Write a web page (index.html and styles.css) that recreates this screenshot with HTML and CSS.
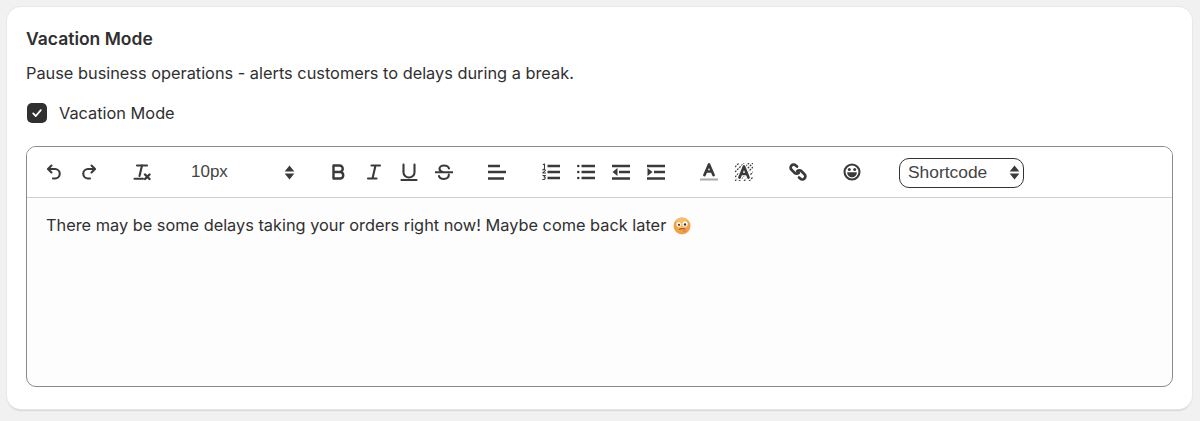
FILE: index.html
```html
<!DOCTYPE html>
<html lang="en">
<head>
    <meta charset="UTF-8">
    <meta name="viewport" content="width=device-width, initial-scale=1.0">
    <title>Vacation Mode</title>
    <link rel="stylesheet" href="styles.css">
</head>
<body>
    <main class="card">
        <h2 class="card-title">Vacation Mode</h2>
        <p class="card-desc">Pause business operations - alerts customers to delays during a break.</p>
        <label class="check-row">
            <span class="check-box">
                <svg width="12" height="12" viewBox="0 0 12 12"><path d="M2.2 6.4l2.6 2.6 5-5.8" fill="none" stroke="#fff" stroke-width="1.8" stroke-linecap="round" stroke-linejoin="round"/></svg>
            </span>
            <span>Vacation Mode</span>
        </label>

        <div class="editor">
            <div class="toolbar">
                <div class="tool-group">
                    <button class="tool" title="Undo">
                        <svg class="icon" viewBox="0 0 18 18"><path class="st" d="M6.5 2.5L3 6l3.5 3.500"/><path class="st" d="M3.5 6H10a4.500 4.500 0 0 1 0 9.500H8"/></svg>
                    </button>
                    <button class="tool" title="Redo">
                        <svg class="icon" viewBox="0 0 18 18"><path class="st" d="M11.5 2.5L15 6l-3.500 3.500"/><path class="st" d="M14.500 6H8a4.500 4.500 0 0 0 0 9.500h2"/></svg>
                    </button>
                </div>
                <div class="tool-group">
                    <button class="tool" title="Clear formatting">
                        <svg class="icon" viewBox="0 0 18 18"><path class="st" d="M4 2.500h10"/><path class="st" d="M9 2.500L6.500 13"/><path class="st" d="M1.500 15.800h8.500" stroke-width="1.200"/><path class="st thick" d="M12 11.500l4.500 4.500M16.500 11.500L12 16"/></svg>
                    </button>
                </div>
                <div class="size-picker">
                    <span>10px</span>
                    <svg class="updown" viewBox="0 0 10 14"><path d="M5 .5l4.500 5.500H.5zM5 13.500L.5 8h9z"/></svg>
                </div>
                <div class="tool-group">
                    <button class="tool" title="Bold">
                        <svg class="icon" viewBox="0 0 18 18"><path class="st thick" d="M3.500 2.500h6a3.200 3.200 0 0 1 0 6.500h-6zM3.500 9h7a3.300 3.300 0 0 1 0 6.500h-7z"/></svg>
                    </button>
                    <button class="tool" title="Italic">
                        <svg class="icon" viewBox="0 0 18 18"><path class="st" d="M6.500 2.500h8.500M3 15.500h8.500M10.500 2.500l-3 13"/></svg>
                    </button>
                    <button class="tool" title="Underline">
                        <svg class="icon" viewBox="0 0 18 18"><path class="st" d="M3.500 1.500v8a5.500 5 0 0 0 11 0v-8"/><path class="st" d="M1.500 17h15"/></svg>
                    </button>
                    <button class="tool" title="Strikethrough">
                        <svg class="icon" viewBox="0 0 18 18"><path class="st" d="M14 5.500C13.500 3.600 11.200 2.500 9 2.500 6.800 2.500 4.500 3.500 4.500 5.800c0 1.700 1.200 2.600 3 3.100"/><path class="st" d="M13.800 11.500c.4 2.800-2.200 4.500-4.800 4.500-2.500 0-4.500-1-5-3"/><path class="st" d="M.5 9.200h17" stroke-width="1.300"/></svg>
                    </button>
                </div>
                <div class="tool-group">
                    <button class="tool" title="Align">
                        <svg class="icon" viewBox="0 0 18 18"><path class="st flat" d="M0 3h12M0 9h18M0 15.500h16"/></svg>
                    </button>
                </div>
                <div class="tool-group">
                    <button class="tool" title="Ordered list">
                        <svg class="icon" viewBox="0 0 18 18"><path class="st flat" d="M5.500 3h12.500M5.500 9h12.500M5.500 15h12.500"/><path class="st thin" d="M1.300 1.500l1.200-.5v4.500M.8 7c.4-1 2.800-.8 2.400.6-.3.800-2 1.300-2.400 2.400h2.800M.9 12.500h2.500L2 13.900c1.800 0 1.800 3-1.200 2.500"/></svg>
                    </button>
                    <button class="tool" title="Bullet list">
                        <svg class="icon" viewBox="0 0 18 18"><path class="st flat" d="M4.500 3h13.500M4.500 9h13.500M4.500 15h13.500"/><circle cx="1.300" cy="3" r="1.300"/><circle cx="1.300" cy="9" r="1.300"/><circle cx="1.300" cy="15" r="1.300"/></svg>
                    </button>
                    <button class="tool" title="Decrease indent">
                        <svg class="icon" viewBox="0 0 18 18"><path class="st flat" d="M0 3h18M7 9h11M0 15.500h18"/><path d="M5.500 5v8L.5 9z"/></svg>
                    </button>
                    <button class="tool" title="Increase indent">
                        <svg class="icon" viewBox="0 0 18 18"><path class="st flat" d="M0 3h18M7 9h11M0 15.500h18"/><path d="M.5 5v8l5-4z"/></svg>
                    </button>
                </div>
                <div class="tool-group">
                    <button class="tool" title="Text colour">
                        <svg class="icon" viewBox="0 0 18 18"><path class="st bold" d="M4.500 12L9 1.500 13.500 12M6 8.500h6"/><path d="M0 15.500h18v2H0z" fill="#aaa"/></svg>
                    </button>
                    <button class="tool" title="Background colour">
                        <svg class="icon" viewBox="0 0 18 18"><path class="hatch" d="M0 4L4 0M0 9L9 0M0 14L14 0M0 18L18 0M4 18L18 4M9 18l9-9M14 18l4-4"/><path class="st halo" d="M4.500 14.500L9 3.500l4.500 11M6 11h6"/><path class="st bold" d="M4.500 14.500L9 3.500l4.500 11M6 11h6"/></svg>
                    </button>
                </div>
                <div class="tool-group">
                    <button class="tool" title="Link">
                        <svg class="icon" viewBox="0 0 18 18"><path class="st bold" d="M8 3.600L6.800 2.500a3 3 0 0 0-4.300 4.300l3 3a3 3 0 0 0 4.300 0"/><path class="st bold" d="M10 14.400l1.200 1.100a3 3 0 0 0 4.300-4.300l-3-3a3 3 0 0 0-4.300 0"/></svg>
                    </button>
                </div>
                <div class="tool-group emoji-tool">
                    <button class="tool" title="Emoji">
                        <svg class="icon" viewBox="0 0 18 18"><circle class="st" cx="9" cy="9" r="7.500" stroke-width="2.400"/><circle cx="6.300" cy="6.500" r="1.500"/><circle cx="11.700" cy="6.500" r="1.500"/><path d="M4.200 9.200h9.600c0 3.200-2.200 5-4.800 5s-4.800-1.800-4.800-5z"/></svg>
                    </button>
                </div>
                <div class="shortcode">
                    <span>Shortcode</span>
                    <svg class="updown" viewBox="0 0 10 14"><path d="M5 .5l4.500 5.500H.5zM5 13.500L.5 8h9z"/></svg>
                </div>
            </div>
            <div class="editor-body">
                There may be some delays taking your orders right now! Maybe come back later
                <svg class="emoji" viewBox="0 0 18 18">
                    <circle cx="9" cy="9" r="8.500" fill="#f0a24a"/>
                    <circle cx="9" cy="6.500" r="6" fill="#f6bd6a"/>
                    <circle cx="5.800" cy="7.500" r="2.200" fill="#fff"/>
                    <circle cx="12" cy="7" r="2.500" fill="#fff"/>
                    <circle cx="6" cy="7.800" r="1.100" fill="#4a3320"/>
                    <circle cx="12" cy="7.500" r="1.200" fill="#4a3320"/>
                    <path d="M6 12.500c2-1 4-1 6.500-.5" fill="none" stroke="#a5592a" stroke-width="1.200"/>
                    <circle cx="11.500" cy="13.800" r="1.800" fill="#e8845c"/>
                </svg>
            </div>
        </div>
    </main>
</body>
</html>
```

FILE: styles.css
```css
html, body {
    height: 100%;
}
body {
    font-family: Inter, "Noto Sans", sans-serif;
    font-size: 16.33px;
    color: #303030;
    margin: 0;
    padding: 7px 8px 12px 7px;
    box-sizing: border-box;
    background-color: #f1f1f1;
    overflow: hidden;
}
.card {
    height: 402px;
    box-sizing: border-box;
    padding: 21px 19px 0;
    background: #fff;
    border-radius: 14px;
    box-shadow: 0 0 0 1px #e8e8e8, 0 2px 1px #d6d6d6;
    display: flex;
    flex-direction: column;
}
.card-title {
    font-size: 17.5px;
    font-weight: 600;
    line-height: 22px;
    margin: 0;
}
.card-desc {
    line-height: 22px;
    margin: 12px 0 0 0;
}
.check-row {
    display: flex;
    align-items: center;
    gap: 12px;
    margin: 18px 0 0 1px;
    height: 22px;
}
.check-box {
    width: 20px;
    height: 20px;
    border-radius: 5px;
    background: #303030;
    display: flex;
    align-items: center;
    justify-content: center;
}
.editor {
    margin-top: 22px;
    height: 241px;
    box-sizing: border-box;
    border: 1px solid #8a8a8a;
    border-radius: 10px;
    overflow: hidden;
    background: #fdfdfd;
}
.toolbar {
    height: 51px;
    box-sizing: border-box;
    padding: 0 9px;
    background: #fff;
    border-bottom: 1px solid #cfcfcf;
    display: flex;
    align-items: center;
    gap: 18.5px;
}
.tool-group {
    display: flex;
}
.emoji-tool {
    margin-left: 1px;
}
.tool {
    width: 35px;
    height: 30px;
    padding: 0;
    border: none;
    background: none;
    display: flex;
    align-items: center;
    justify-content: center;
}
.icon {
    width: 18px;
    height: 18px;
    fill: #3a3a3a;
}
.st {
    fill: none;
    stroke: #3a3a3a;
    stroke-width: 2.1;
    stroke-linecap: round;
    stroke-linejoin: round;
}
.flat {
    stroke-width: 2.3;
    stroke-linecap: butt;
}
.thick {
    stroke-width: 2.4;
}
.bold {
    stroke-width: 2.7;
}
.thin {
    stroke-width: 1.1;
}
.halo {
    stroke: #fff;
    stroke-width: 5;
}
.hatch {
    fill: none;
    stroke: #444;
    stroke-width: 1.3;
    stroke-dasharray: 2 1;
}
.size-picker {
    width: 124.5px;
    box-sizing: border-box;
    padding: 0 8px 0 13px;
    display: flex;
    align-items: center;
    justify-content: space-between;
    font-family: "Liberation Sans", Arial, sans-serif;
    font-size: 17px;
    color: #444;
}
.updown {
    width: 11px;
    height: 15px;
    fill: #3a3a3a;
}
.shortcode {
    margin: 1px 0 0 11px;
    width: 125px;
    height: 30px;
    box-sizing: border-box;
    padding: 0 3px 0 8px;
    border: 1px solid #333;
    border-radius: 10px;
    display: flex;
    align-items: center;
    justify-content: space-between;
    font-family: "Liberation Sans", Arial, sans-serif;
    font-size: 17.4px;
    color: #444;
}
.editor-body {
    padding: 16px 19px;
    line-height: 22px;
}
.emoji {
    width: 18px;
    height: 18px;
    vertical-align: -4px;
    margin-left: 2px;
}
```
